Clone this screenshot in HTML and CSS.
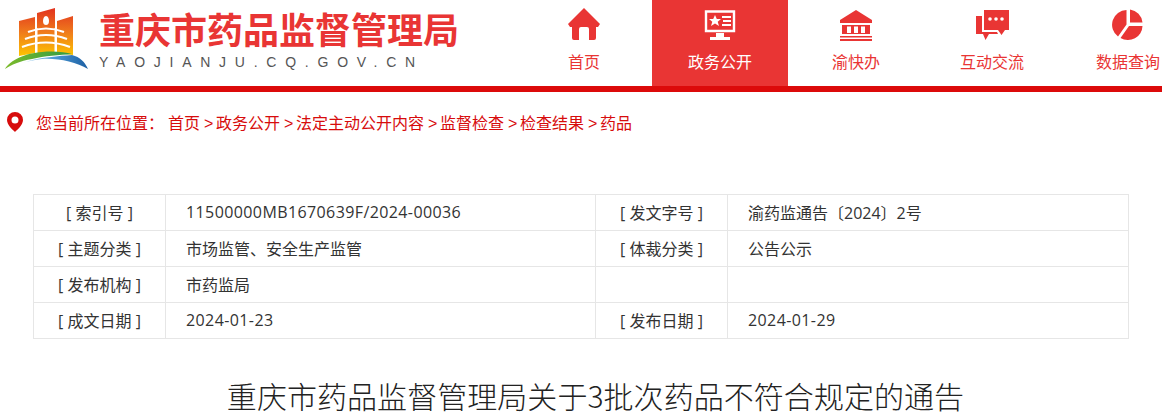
FILE: index.html
```html
<!DOCTYPE html>
<html lang="zh-CN">
<head>
    <meta charset="UTF-8">
    <meta name="viewport" content="width=device-width, initial-scale=1.0">
    <title>重庆市药品监督管理局</title>
    <link rel="stylesheet" href="styles.css">
</head>
<body>
    <header class="header">
        <div class="brand">
            <svg class="logo" width="90" height="72" viewBox="0 0 90 72">
                <defs>
                    <linearGradient id="tower" x1="0" y1="0" x2="0" y2="1">
                        <stop offset="0" stop-color="#e2321f"/>
                        <stop offset="0.5" stop-color="#ef7a1c"/>
                        <stop offset="1" stop-color="#fdc400"/>
                    </linearGradient>
                    <linearGradient id="land" x1="0" y1="0" x2="1" y2="0">
                        <stop offset="0" stop-color="#7dbb2a"/>
                        <stop offset="1" stop-color="#2f9a45"/>
                    </linearGradient>
                    <linearGradient id="water" x1="0" y1="0" x2="1" y2="0">
                        <stop offset="0" stop-color="#a5d3ee"/>
                        <stop offset="0.5" stop-color="#4a97d2"/>
                        <stop offset="1" stop-color="#1c5fa3"/>
                    </linearGradient>
                </defs>
                <path fill="url(#tower)" d="M19 21 35 17V53L19 56ZM37 13 55 8V53H37ZM57 21 73 16V55L57 53Z"/>
                <path fill="#fff" d="M46 16C48 16 49 19 49 21 49 24 47.500 25 46 25 44.500 25 43 24 43 21 43 19 44 16 46 16Z"/>
                <path fill="none" stroke="#fff" stroke-width="2.200" d="M28 32Q46 25 64 32M25 39Q46 31 67 39M22 47Q46 38 70 47"/>
                <path fill="none" stroke="#fff" stroke-width="1" d="M37 28V53M55 28V53"/>
                <path fill="url(#water)" d="M22 63C40 57 60 56 72 55 80 57 85 62 88 69 76 62 58 58 42 59 34 60 28 61 22 63Z"/>
                <path fill="url(#land)" d="M5 69C10 60 26 53 42 52 54 51 65 52 72 54 60 55 44 56 32 59 20 61 11 65 5 69Z"/>
            </svg>
            <div class="brand-text">
                <div class="brand-name">重庆市药品监督管理局</div>
                <div class="brand-url">YAOJIANJU.CQ.GOV.CN</div>
            </div>
        </div>
        <nav class="nav">
            <a class="nav-item">
                <svg width="34" height="34" viewBox="0 0 34 34"><path fill="currentColor" d="M17 1 33 17 31 20H29V31Q29 33 27 33H22V22Q22 20 20 20H14Q12 20 12 22V33H7Q5 33 5 31V20H3L1 17Z"/></svg>
                <span>首页</span>
            </a>
            <a class="nav-item active">
                <svg width="34" height="34" viewBox="0 0 34 34">
                    <path fill="none" stroke="currentColor" stroke-width="2.400" d="M3 4.500H31V24H3Z"/>
                    <path fill="currentColor" d="M13 26H21V30H27V33H7V30H13ZM12 8 13.800 12H18L14.700 14.800 16 19 12 16.500 8 19 9.300 14.800 6 12H10.200ZM19 9H28V11H19ZM20 13H28V15H20ZM19 17H28V19H19Z"/>
                </svg>
                <span>政务公开</span>
            </a>
            <a class="nav-item">
                <svg width="34" height="34" viewBox="0 0 34 34"><path fill="currentColor" d="M17 3 33 13V16H1V13ZM3 18H31V27H3ZM1 29H33V30.500H1ZM1 32H33V34H1Z"/><path fill="#fff" d="M8 19.500H12V26H8ZM15 19.500H19V26H15ZM22 19.500H26V26H22Z"/></svg>
                <span>渝快办</span>
            </a>
            <a class="nav-item">
                <svg width="34" height="34" viewBox="0 0 34 34"><path fill="currentColor" d="M9 3H34V23H30L26.500 28 23 23H9Z"/><path fill="currentColor" d="M1 9H7V25H22L23 27H14L10.500 33 8 27H1Z"/><circle cx="15" cy="12" r="1.800" fill="#fff"/><circle cx="21" cy="12" r="1.800" fill="#fff"/><circle cx="27" cy="12" r="1.800" fill="#fff"/></svg>
                <span>互动交流</span>
            </a>
            <a class="nav-item">
                <svg width="34" height="34" viewBox="0 0 34 34"><path fill="currentColor" d="M19 2.500A14.500 14.500 0 0 1 31.500 15.500H19ZM15.500 3V17.500L7 29.500A14.700 14.700 0 0 1 15.500 3ZM18 19H31.500A14.500 14.500 0 0 1 9.500 31Z"/></svg>
                <span>数据查询</span>
            </a>
        </nav>
    </header>

    <div class="crumbs">
        <svg width="16" height="20" viewBox="0 0 16 20"><path fill="#d70c0c" fill-rule="evenodd" d="M8 0A8 8 0 0 1 16 8C16 13 10 18 8 20 6 18 0 13 0 8A8 8 0 0 1 8 0ZM8 4.500A3.500 3.500 0 1 0 8 11.500 3.500 3.500 0 0 0 8 4.500Z"/></svg>
        <span class="crumbs-label">您当前所在位置：</span>
        <a>首页</a>
        <a><i>&gt;</i>政务公开</a>
        <a><i>&gt;</i>法定主动公开内容</a>
        <a><i>&gt;</i>监督检查</a>
        <a><i>&gt;</i>检查结果</a>
        <a><i>&gt;</i>药品</a>
    </div>

    <table class="meta">
        <tr>
            <th>[ 索引号 ]</th><td class="num">11500000MB1670639F/2024-00036</td>
            <th>[ 发文字号 ]</th><td>渝药监通告〔2024〕2号</td>
        </tr>
        <tr>
            <th>[ 主题分类 ]</th><td>市场监管、安全生产监管</td>
            <th>[ 体裁分类 ]</th><td>公告公示</td>
        </tr>
        <tr>
            <th>[ 发布机构 ]</th><td>市药监局</td>
            <th></th><td></td>
        </tr>
        <tr>
            <th>[ 成文日期 ]</th><td class="num">2024-01-23</td>
            <th>[ 发布日期 ]</th><td class="num">2024-01-29</td>
        </tr>
    </table>

    <h1 class="title">重庆市药品监督管理局关于3批次药品不符合规定的通告</h1>
</body>
</html>
```

FILE: styles.css
```css
* {
    box-sizing: border-box;
}

html, body {
    overflow: hidden;
}

body {
    margin: 0;
    background-color: #fff;
    font-family: "Open Sans", "Noto Sans CJK SC", sans-serif;
    color: #333;
}

.header {
    display: flex;
    height: 92px;
    border-bottom: 6px solid #dc0a0a;
    overflow: hidden;
}

.brand {
    display: flex;
    flex: 0 0 516px;
}

.logo {
    flex: none;
    margin-right: 9px;
}

.brand-text {
    padding-top: 3px;
}

.brand-name {
    font-family: "Noto Sans CJK SC", sans-serif;
    font-size: 36px;
    font-weight: 700;
    line-height: 50px;
    color: #e93534;
}

.brand-url {
    font-family: "Liberation Sans", sans-serif;
    font-size: 14px;
    line-height: 16px;
    margin-top: 1px;
    letter-spacing: 8.75px;
    color: #555;
}

.nav {
    display: flex;
}

.nav-item {
    display: flex;
    flex: 0 0 136px;
    flex-direction: column;
    align-items: center;
    padding-top: 7px;
    color: #e93534;
    font-family: "Noto Sans CJK SC", sans-serif;
    font-size: 16px;
}

.nav-item span {
    margin-top: 8px;
    line-height: 24px;
}

.nav-item.active {
    background-color: #e93534;
    color: #fff;
}

.crumbs {
    display: flex;
    align-items: center;
    height: 20px;
    margin: 20px 0 0 7px;
    font-family: "Noto Sans CJK SC", sans-serif;
    font-size: 16px;
    color: #d70c0c;
}

.crumbs svg {
    margin-right: 13px;
}

.crumbs-label {
    margin-right: 4px;
}

.crumbs a {
    margin-right: 4px;
}

.crumbs i {
    display: inline-block;
    width: 12px;
    font-style: normal;
    font-family: "Liberation Sans", sans-serif;
}

.meta {
    width: 1096px;
    margin: 62px 0 0 33px;
    border-collapse: collapse;
    table-layout: fixed;
    font-size: 16px;
}

.meta th,
.meta td {
    height: 36px;
    padding: 0 0 2px;
    border: 1px solid #e6e6e6;
    font-weight: 400;
}

.meta th {
    width: 132px;
    text-align: center;
}

.meta td {
    padding-left: 20px;
}

.meta td:nth-child(2) {
    width: 430px;
}

.meta .num {
    letter-spacing: 0.4px;
}

.title {
    margin: 34px 0 0;
    padding-left: 29px;
    font-family: "Noto Sans CJK SC", sans-serif;
    font-size: 30px;
    font-weight: 300;
    line-height: 44px;
    letter-spacing: 0.05px;
    text-align: center;
    color: #222;
}
```
